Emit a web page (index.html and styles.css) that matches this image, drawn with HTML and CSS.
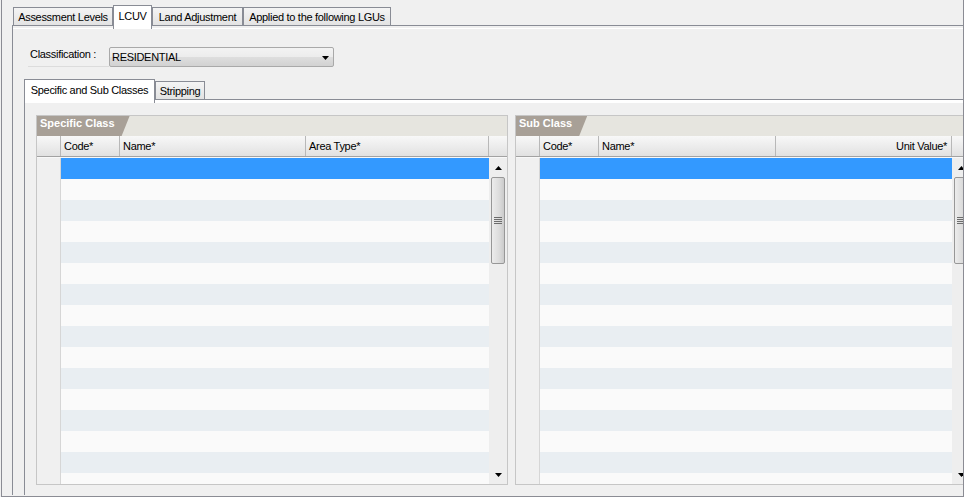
FILE: index.html
```html
<!DOCTYPE html>
<html>
<head>
<meta charset="utf-8">
<title>LCUV</title>
<link rel="stylesheet" href="styles.css">
</head>
<body>
<div class="frame">
  <div class="tabstrip">
    <div class="tab t-assess">Assessment Levels</div>
    <div class="tab sel t-lcuv">LCUV</div>
    <div class="tab t-land">Land Adjustment</div>
    <div class="tab t-lgu">Applied to the following LGUs</div>
  </div>
  <div class="pane pane-top">
    <div class="class-row">
      <label class="class-label">Classification :</label>
      <div class="combo"><span>RESIDENTIAL</span><svg class="combo-arrow" width="7" height="4" viewBox="0 0 7 4"><path d="M0 0h7L3.5 4z"/></svg></div>
    </div>
    <div class="tabstrip sub">
      <div class="tab sel t-spec">Specific and Sub Classes</div>
      <div class="tab t-strip">Stripping</div>
    </div>
    <div class="pane pane-inner">
      <section class="grid g-spec">
        <div class="grid-title"><span class="title-tab">Specific Class</span></div>
        <div class="grid-head">
          <div class="hc rh"></div>
          <div class="hc c-code">Code*</div>
          <div class="hc c-name">Name*</div>
          <div class="hc c-area">Area Type*</div>
          <div class="hc corner"></div>
        </div>
        <div class="grid-body">
          <div class="rowhdr"></div>
          <div class="rows">
            <div class="row sel"></div><div class="row"></div><div class="row"></div><div class="row"></div>
            <div class="row"></div><div class="row"></div><div class="row"></div><div class="row"></div>
            <div class="row"></div><div class="row"></div><div class="row"></div><div class="row"></div>
            <div class="row"></div><div class="row"></div><div class="row"></div><div class="row"></div>
          </div>
          <div class="sb">
            <div class="sb-btn"><svg width="7" height="4" viewBox="0 0 7 4"><path d="M0 4h7L3.5 0z"/></svg></div>
            <div class="sb-thumb"><i class="grip"></i></div>
            <div class="sb-space"></div>
            <div class="sb-btn"><svg width="7" height="4" viewBox="0 0 7 4"><path d="M0 0h7L3.5 4z"/></svg></div>
          </div>
        </div>
      </section>
      <section class="grid g-sub">
        <div class="grid-title"><span class="title-tab">Sub Class</span></div>
        <div class="grid-head">
          <div class="hc rh"></div>
          <div class="hc c-code">Code*</div>
          <div class="hc c-name">Name*</div>
          <div class="hc c-unit">Unit Value*</div>
          <div class="hc corner"></div>
        </div>
        <div class="grid-body">
          <div class="rowhdr"></div>
          <div class="rows">
            <div class="row sel"></div><div class="row"></div><div class="row"></div><div class="row"></div>
            <div class="row"></div><div class="row"></div><div class="row"></div><div class="row"></div>
            <div class="row"></div><div class="row"></div><div class="row"></div><div class="row"></div>
            <div class="row"></div><div class="row"></div><div class="row"></div><div class="row"></div>
          </div>
          <div class="sb">
            <div class="sb-btn"><svg width="7" height="4" viewBox="0 0 7 4"><path d="M0 4h7L3.5 0z"/></svg></div>
            <div class="sb-thumb"><i class="grip"></i></div>
            <div class="sb-space"></div>
            <div class="sb-btn"><svg width="7" height="4" viewBox="0 0 7 4"><path d="M0 0h7L3.5 4z"/></svg></div>
          </div>
        </div>
      </section>
    </div>
  </div>
</div>
</body>
</html>
```
FILE: styles.css
```css
* { box-sizing: border-box; }
html, body { margin: 0; padding: 0; }
body {
  width: 964px;
  height: 497px;
  overflow: hidden;
  background: #f0f0f0;
  font-family: "Liberation Sans", Arial, sans-serif;
  font-size: 11px;
  letter-spacing: -0.3px;
  color: #000;
}
.frame {
  margin-left: 1px;
  width: 963px;
  height: 497px;
  border: 1px solid #8b8c94;
  border-top: 0;
  padding: 0 0 1px 10px;
  display: flex;
  flex-direction: column;
  overflow: hidden;
}
.tabstrip {
  display: flex;
  align-items: flex-end;
  height: 25px;
  padding-left: 1px;
  flex: none;
}
.tab {
  flex: none;
  height: 18px;
  border: 1px solid #898c95;
  border-bottom: 0;
  padding-top: 2px;
  line-height: 14px;
  text-align: center;
  white-space: nowrap;
  background: linear-gradient(#f4f4f4, #e3e3e3);
}
.tab.sel {
  height: 24px;
  margin-bottom: -4px;
  padding-top: 3px;
  background: #fff;
  position: relative;
  z-index: 1;
}
.t-assess { width: 100px; }
.t-lcuv { width: 39px; }
.t-land { width: 91px; }
.t-lgu { width: 148px; }
.pane {
  border-left: 1px solid #898c95;
  border-top: 1px solid #898c95;
}
.pane-top {
  flex: 1;
  min-height: 0;
  display: flex;
  flex-direction: column;
  background: linear-gradient(#f0f0f0 2px, #fff 2px, #fff 3px, #f0f0f0 3px);
}
.class-row {
  display: flex;
  flex: none;
  height: 20px;
  margin-top: 21px;
  margin-left: 15px;
}
.class-label {
  width: 81px;
  padding-left: 2px;
  line-height: 14px;
  border-bottom: 1px solid #dcdcdc;
}
.combo {
  width: 225px;
  height: 20px;
  border: 1px solid #a9a9a9;
  border-radius: 2px;
  background: linear-gradient(#f3f3f3, #ececec 50%, #dedede 50%, #d2d2d2);
  display: flex;
  align-items: center;
  justify-content: space-between;
  padding: 0 4px 0 2px;
  line-height: 18px;
}
.combo-arrow { display: block; margin-top: 2px; }
.tabstrip.sub {
  height: 32px;
  margin-left: 11px;
  padding-left: 0;
}
.t-spec { width: 131px; }
.t-strip { width: 50px; }
.pane-inner {
  flex: 1;
  min-height: 0;
  margin-left: 11px;
  display: flex;
  align-items: flex-start;
  gap: 7px;
  padding: 15px 0 0 11px;
  overflow: hidden;
  background: linear-gradient(#fff 3px, #f0f0f0 3px);
}
.grid {
  flex: none;
  height: 370px;
  border: 1px solid #c6c6c6;
  display: flex;
  flex-direction: column;
  background: #f0f0f0;
}
.g-spec { width: 472px; }
.g-sub { width: 456px; }
.grid-title {
  flex: none;
  height: 20px;
  display: flex;
  background: #e6e5df;
}
.title-tab {
  background: #a8a097;
  color: #fff;
  font-weight: bold;
  letter-spacing: 0;
  line-height: 15px;
  padding: 0 15px 0 3px;
  clip-path: polygon(0 0, 100% 0, calc(100% - 8px) 100%, 0 100%);
}
.grid-head {
  flex: none;
  height: 21px;
  display: flex;
  border-bottom: 1px solid #a2a2a2;
  background: linear-gradient(#f8f8f8, #e1e1e1);
  line-height: 20px;
}
.hc {
  flex: none;
  border-right: 1px solid #b8b8b8;
  padding-left: 3px;
  white-space: nowrap;
  overflow: hidden;
}
.hc.rh { width: 24px; }
.c-code { width: 59px; }
.g-spec .c-name { width: 186px; }
.c-area { width: 183px; }
.g-sub .c-name { width: 177px; }
.c-unit { width: 176px; text-align: right; padding-right: 4px; }
.hc.corner { flex: 1; border-right: 0; }
.grid-body {
  flex: 1;
  min-height: 0;
  display: flex;
  border-top: 1px solid #f8f8f8;
}
.rowhdr {
  flex: none;
  width: 24px;
  border-right: 1px solid #d6d6d6;
  background: #f0f0f0;
}
.rows {
  flex: 1;
  overflow: hidden;
  background: #fafafa;
}
.row { height: 21px; }
.row:nth-child(odd) { background: #e9eef2; }
.row.sel { background: #3399ff; }
.sb {
  flex: none;
  width: 18px;
  display: flex;
  flex-direction: column;
  background: #eeeeee;
}
.sb-btn {
  flex: none;
  height: 19px;
  display: flex;
  align-items: center;
  justify-content: center;
}
.sb-btn svg { display: block; }
.sb-thumb {
  flex: none;
  height: 87px;
  width: 14px;
  margin-left: 2px;
  border: 1px solid #979797;
  border-radius: 2px;
  background: linear-gradient(to right, #ececec, #dcdcdc 60%, #cbcbcb);
  display: flex;
  align-items: center;
  justify-content: center;
}
.grip {
  display: block;
  width: 8px;
  height: 7px;
  background: repeating-linear-gradient(#6c6c6c 0 1px, transparent 1px 2px);
}
.sb-space { flex: 1; }
```
